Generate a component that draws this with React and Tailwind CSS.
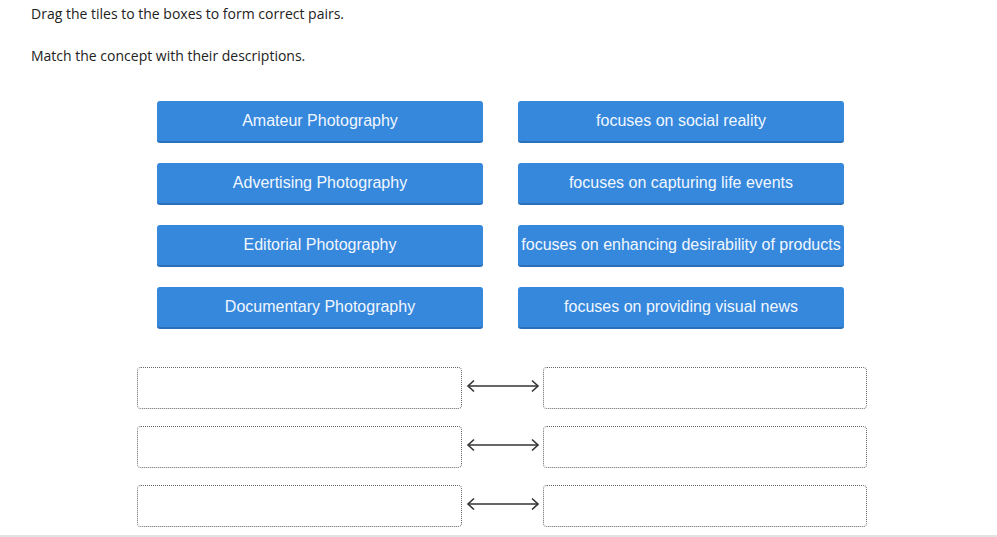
import React from "react";

const concepts = [
  "Amateur Photography",
  "Advertising Photography",
  "Editorial Photography",
  "Documentary Photography",
];

const descriptions = [
  "focuses on social reality",
  "focuses on capturing life events",
  "focuses on enhancing desirability of products",
  "focuses on providing visual news",
];

function Tile({ label }) {
  return (
    <div className="h-[42px] w-[326px] flex items-center justify-center rounded-[3px] bg-[#3588dc] border-b-2 border-[#2a6fb8] text-[#f2f7ff] text-[16px] whitespace-nowrap font-['Liberation_Sans',Arial,sans-serif]">
      {label}
    </div>
  );
}

function Arrow() {
  return (
    <svg width="74" height="14" viewBox="0 0 74 14" className="text-[#333]">
      <path d="M2 7 H72" stroke="currentColor" strokeWidth="1.3" fill="none" />
      <path d="M8 1.5 L2 7 L8 12.5" stroke="currentColor" strokeWidth="1.6" fill="none" />
      <path d="M66 1.5 L72 7 L66 12.5" stroke="currentColor" strokeWidth="1.6" fill="none" />
    </svg>
  );
}

export default function App() {
  return (
    <div className="w-[997px] h-[537px] bg-white overflow-hidden font-['Open_Sans',sans-serif] text-[#222] relative">
      <div className="pl-[31px] pt-[4px] text-[14px] leading-[20px]">
        <p>Drag the tiles to the boxes to form correct pairs.</p>
        <p className="mt-[22px]">Match the concept with their descriptions.</p>
      </div>

      <div className="mt-[35px] pl-[157px] flex gap-[35px]">
        <div className="flex flex-col gap-[20px]">
          {concepts.map((c) => (
            <Tile key={c} label={c} />
          ))}
        </div>
        <div className="flex flex-col gap-[20px]">
          {descriptions.map((d) => (
            <Tile key={d} label={d} />
          ))}
        </div>
      </div>

      <div className="mt-[38px] pl-[137px] flex flex-col gap-[17px]">
        {[0, 1, 2].map((i) => (
          <div key={i} className="flex items-center">
            <div className="w-[325px] h-[42px] border border-dotted border-[#666] rounded-[4px]" />
            <div className="w-[81px] flex justify-center -mt-[4px]">
              <Arrow />
            </div>
            <div className="w-[324px] h-[42px] border border-dotted border-[#666] rounded-[4px]" />
          </div>
        ))}
      </div>

      <div className="absolute left-0 right-0 bottom-0 h-[2px] bg-[#e2e2e2]" />
    </div>
  );
}
